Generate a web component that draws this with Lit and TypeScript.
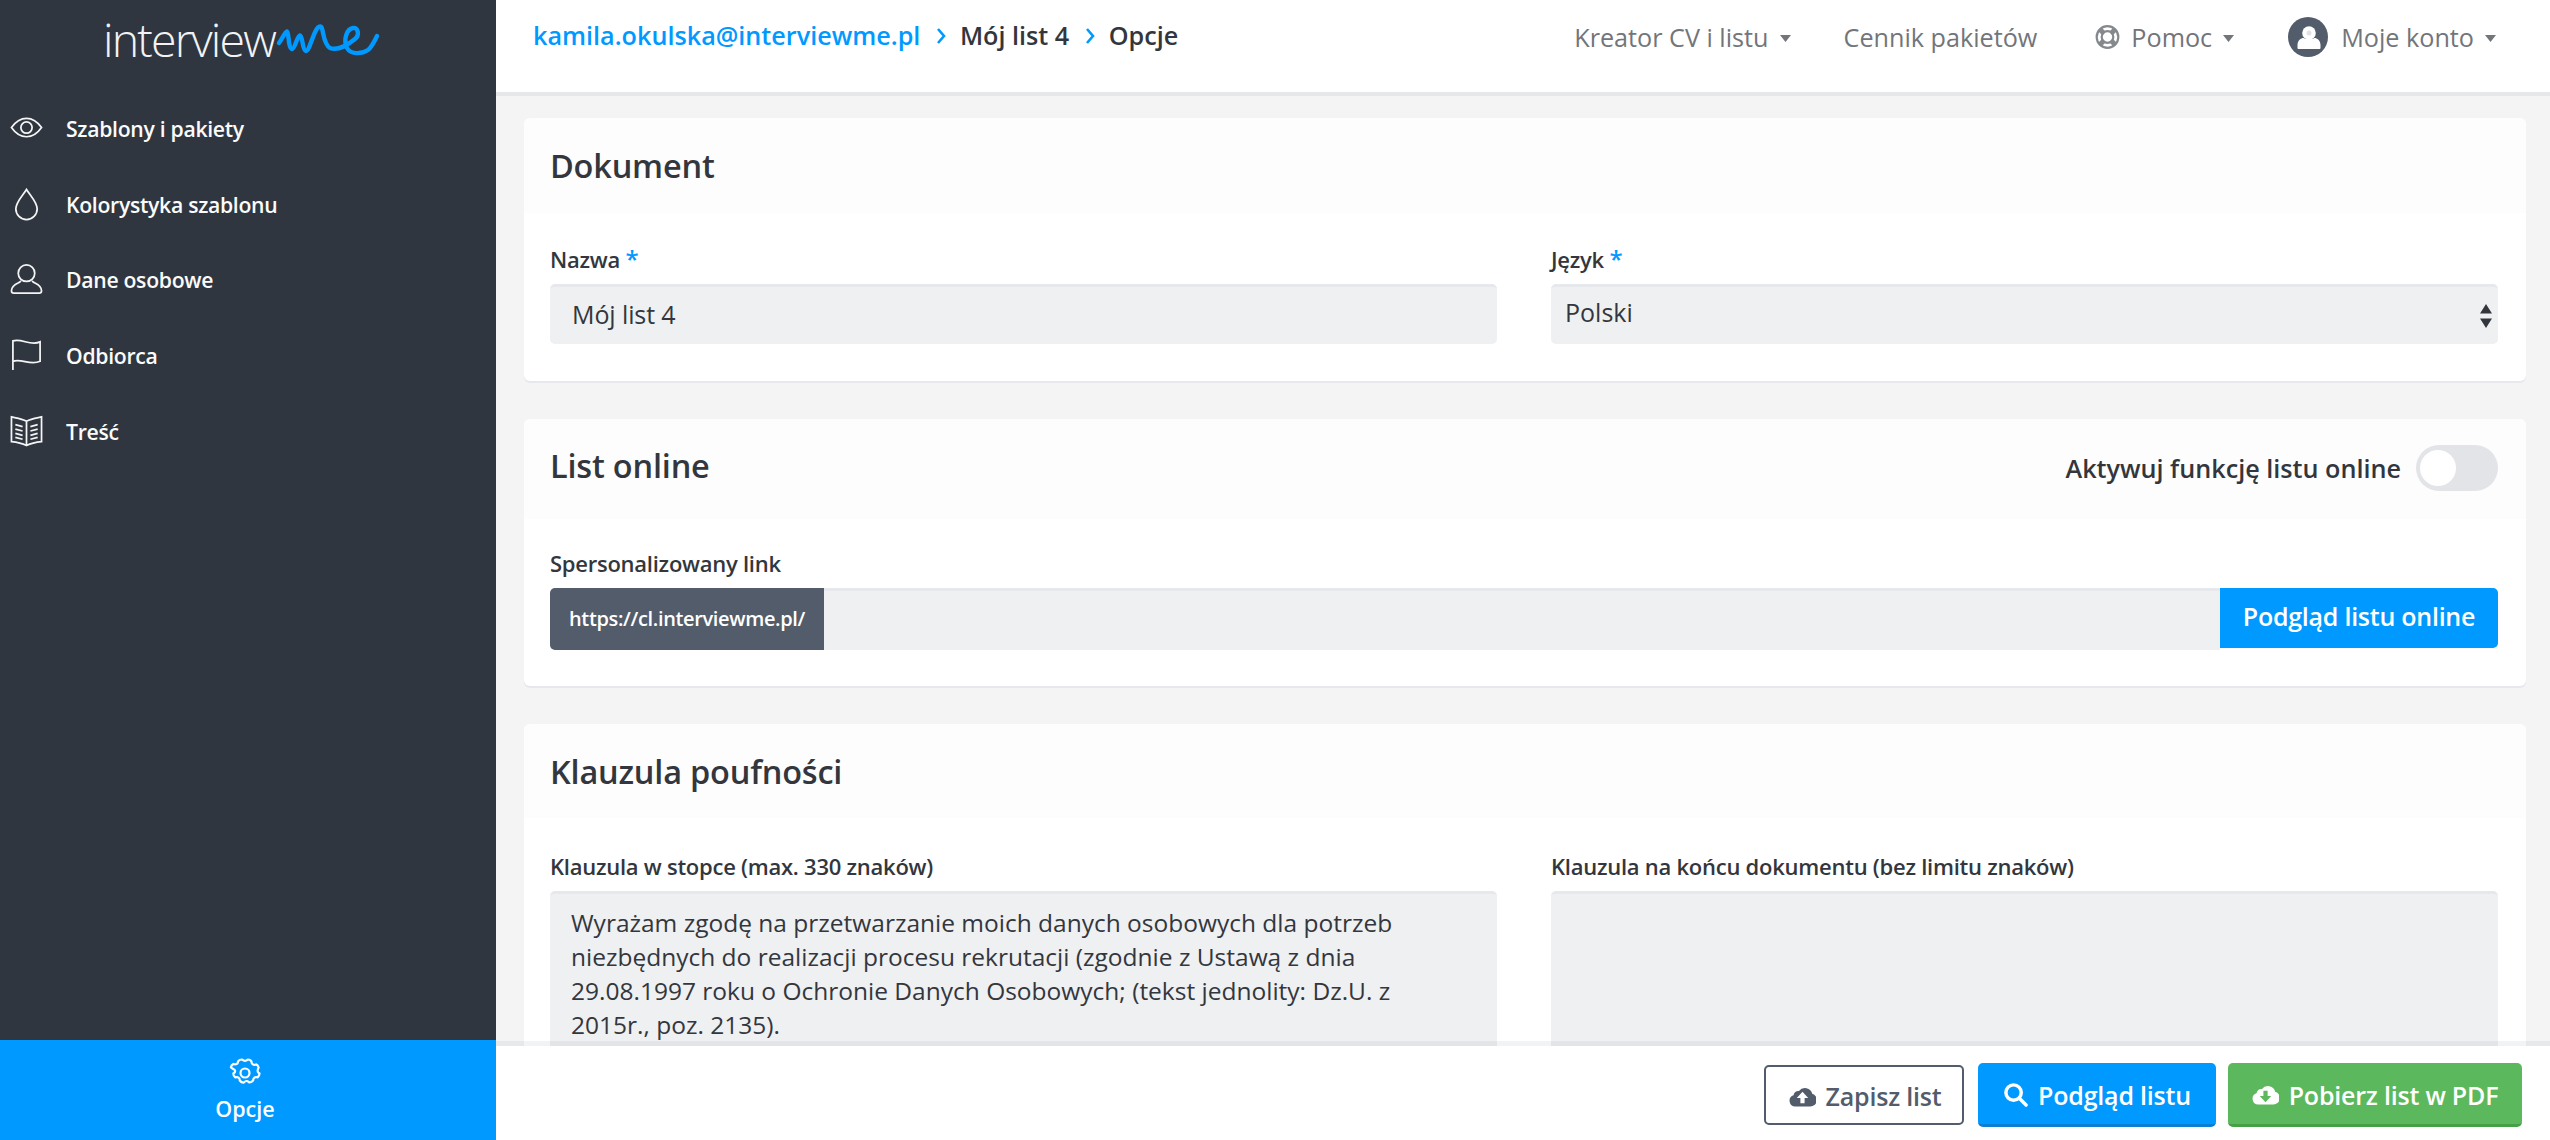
import { LitElement, html, css, svg } from "lit";
import { customElement } from "lit/decorators.js";

const caret = html`<svg class="caret" width="11" height="7" viewBox="0 0 11 7"><path d="M0 0h11L5.5 7z" fill="currentColor"/></svg>`;
const chev = html`<svg class="chev" width="10" height="20" viewBox="0 0 10 20"><path d="M2 3l6 7-6 7" fill="none" stroke="#0099ff" stroke-width="2.6"/></svg>`;

const navIcons = [
  svg`<path d="M1.5 16C6 9.5 11 6.5 17 6.5S28 9.5 32.5 16C28 22.5 23 25.5 17 25.5S6 22.5 1.5 16z"/><circle cx="17" cy="16" r="5.8"/>`,
  svg`<path d="M17 1.5C13 8 6 14.5 6 21.5a11 11 0 0 0 22 0C28 14.5 21 8 17 1.5z"/>`,
  svg`<circle cx="17" cy="10.5" r="8.5"/><path d="M11 18c1 2.5-9.5 3-9.5 10.5 0 1.6.8 2.5 2.5 2.5h26c1.700 0 2.500-.9 2.500-2.500C32.500 21 22 20.500 23 18"/>`,
  svg`<path d="M3 32V2c9-3 18 5.500 28 1v20c-10 4.500-19-3-28 0"/>`,
  svg`<path d="M17 6.500C12 3.500 6 3 1.500 2v25.500c5 .5 10.500 1.500 15.500 4 5-2.500 10.500-3.500 15.500-4V2C28 3 22 3.500 17 6.500zM17 6.500V32"/><path d="M5.500 10l7.500 2M5.500 14.500l7.500 2M5.500 19l7.500 2M5.500 23l7.500 2M28.500 10L21 12M28.500 14.500L21 16.500M28.500 19L21 21M28.500 23L21 25"/>`,
];
const navItems = ["Szablony i pakiety", "Kolorystyka szablonu", "Dane osobowe", "Odbiorca", "Treść"];

const cloud = (up: boolean) => html`<svg class="btn-ico" width="27" height="21" viewBox="0 0 28 22">
  <path fill="currentColor" d="M6.500 21.500A6 6 0 0 1 4.600 9.800 5 5 0 0 1 10.300 5.300 7.800 7.800 0 0 1 24.200 8.200 6.800 6.800 0 0 1 22 21.500z"/>
  <path fill="var(--ico)" d="${up ? "M14 6l6 6.500h-3.800V18h-4.400v-5.500H8z" : "M14 19l6-6.500h-3.800V7h-4.400v5.500H8z"}"/></svg>`;

@customElement("app-root")
export class AppRoot extends LitElement {
  static styles = css`
    :host { display: grid; grid-template-columns: 496px minmax(0, 1fr); grid-template-rows: minmax(0, 1fr); width: 2550px; height: 1140px; overflow: hidden;
      font-family: "Open Sans", "Noto Sans", sans-serif; color: #33373d; background: #f4f4f5; }
    * { box-sizing: border-box; }
    .side { background: #2f3640; display: flex; flex-direction: column; color: #fff; min-height: 0; }
    .logo { height: 91px; flex: none; display: flex; align-items: flex-start; padding: 9px 0 0 103px; }
    .logo span { font-size: 46.500px; font-weight: 300; letter-spacing: -1.800px; line-height: 60px; color: #f2f3f4; }
    .logo svg { margin: 6px 0 0 -3px; flex: none; }
    .nav { flex: 1; }
    .item { height: 75.600px; display: flex; align-items: center; padding-left: 10px; gap: 23px; font-size: 21.200px; font-weight: 600; color: #fbfbfb; letter-spacing: -.300px; }
    .item svg { fill: none; stroke: #f4f4f4; stroke-width: 1.800; flex: none; }
    .opts { height: 100px; flex: none; background: #0099ff; display: flex; flex-direction: column; align-items: center; padding: 17px 6px 0 0; font-size: 21.500px; font-weight: 600; gap: 5px; line-height: 30px; }
    .main { display: flex; flex-direction: column; min-width: 0; min-height: 0; background: #f4f4f5; }
    .top { height: 92px; flex: none; background: #fff; box-shadow: 0 4px 0 #e6e7e8; display: flex; align-items: flex-start; justify-content: space-between; padding: 0 54px 0 37px; position: relative; z-index: 1; }
    .crumbs { display: flex; align-items: center; height: 70px; font-size: 25.200px; font-weight: 600; color: #33373d; }
    .crumbs a { color: #0099ff; }
    .chev { margin: 2px 14px 0 15.500px; }
    .menu { display: flex; align-items: center; height: 74px; font-size: 25.200px; color: #72757a; }
    .menu .m { display: flex; align-items: center; }
    .caret { margin-left: 11px; margin-top: 2px; }
    .m1 { margin-right: 53px; } .m2 { margin-right: 58px; } .m3 { margin-right: 54px; }
    .buoy { margin-right: 11px; } .ava { margin-right: 13px; }
    .content { flex: 1; min-height: 0; overflow: hidden; padding: 26px 24px 0 28px; display: flex; flex-direction: column; gap: 38px; }
    .card { background: #fff; border-radius: 6px; box-shadow: 0 2px 0 #e6e8eb; flex: none; }
    .head { background: #fdfdfd; display: flex; align-items: center; justify-content: space-between; padding: 0 28px 0 26px; border-radius: 6px 6px 0 0; }
    h2 { margin: 0; font-size: 32.500px; font-weight: 600; color: #33373d; letter-spacing: -.200px; }
    .h1 { height: 95px; } .h2 { height: 100px; } .h3 { height: 94px; }
    .h2 h2 { margin-top: -7px; }
    .body { padding: 31px 28px 37px 26px; display: grid; grid-template-columns: 1fr 1fr; column-gap: 54px; }
    .body.one { grid-template-columns: 1fr; padding: 29px 28px 36px 26px; }
    .body.three { padding-top: 33px; }
    label { display: block; font-size: 22px; font-weight: 600; line-height: 30px; color: #33373d; margin-bottom: 10px; letter-spacing: -.250px; }
    label b { color: #0099ff; font-weight: 600; font-size: 24px; }
    input, select, textarea { display: block; width: 100%; background: #eff0f2; border: 0; border-top: 3px solid #e6e8eb; border-radius: 5px; font: inherit; font-size: 25px; color: #33373d; outline: 0; }
    input.t { height: 60px; padding: 0 22px 4px; letter-spacing: -.100px; }
    .sel { position: relative; }
    select { appearance: none; height: 60px; padding: 0 14px 8px; }
    .sel svg { position: absolute; right: 5px; top: 19px; pointer-events: none; }
    .switch { display: flex; align-items: center; gap: 15px; font-size: 25.200px; font-weight: 600; margin-top: -3px; }
    .tog { width: 82px; height: 46px; border-radius: 23px; background: #e2e4e8; display: flex; align-items: center; padding-left: 4px; }
    .tog i { display: block; width: 36px; height: 36px; border-radius: 50%; background: #fff; }
    .group { display: flex; height: 62px; }
    .pre { flex: none; width: 274px; background: #525c6b; color: #fff; font-size: 20px; font-weight: 600; letter-spacing: -.350px; display: flex; align-items: center; justify-content: center; border-radius: 5px 0 0 5px; padding-bottom: 2px; }
    .group input { flex: 1; min-width: 0; height: 62px; border-radius: 0; }
    .go { flex: none; width: 278px; height: 60px; border: 0; background: #0099ff; color: #fff; font: inherit; font-size: 25px; font-weight: 600; letter-spacing: -.250px; border-radius: 0 5px 5px 0; padding: 0 0 4px; }
    textarea { height: 300px; resize: none; padding: 12px 46px 12px 21px; font-size: 24.500px; line-height: 34px; overflow: hidden; }
    .foot { height: 94px; flex: none; background: #fff; box-shadow: 0 -5px 0 rgba(40,50,60,.06); display: flex; align-items: center; justify-content: flex-end; padding: 4px 28px 0 0; gap: 12px; position: relative; z-index: 1; }
    .btn { height: 64px; border: 0; border-bottom: 3px solid; border-radius: 5px; color: #fff; font: inherit; font-size: 25px; font-weight: 600; display: flex; align-items: center; justify-content: center; gap: 10px; letter-spacing: -.200px; padding: 2px 0 0; }
    .save { width: 200px; height: 60px; border: 2.500px solid #525c6b; background: #fff; color: #525c6b; --ico: #fff; margin-right: 2px; font-weight: 600; padding-left: 2px; }
    .prev { width: 238px; background: #0099ff; border-color: #0a7fd4; }
    .pdf { width: 294px; background: #5cb85c; border-color: #46a046; color: #fff; --ico: #5cb85c; }
  `;

  render() {
    return html`
      <aside class="side">
        <div class="logo"><span>interview</span>
          <svg width="115" height="50" viewBox="0 0 115 50" aria-hidden="true"><path d="M7 28C10 24 13 17 15 16.500 17 17 16 33 20 34 23 34 25 21 28 20.500 31 21 30 35 34 36 38 36 42 12 48 11.500 52 11 50 28 58 33 63 35 72 33 83 24 88 20 86 12 81 13 75 14 71 24 75 33 79 40 90 39 96 35 100 32 103 25 105 21" fill="none" stroke="#0099ff" stroke-width="4.400" stroke-linecap="round" stroke-linejoin="round"/></svg>
        </div>
        <nav class="nav">
          ${navItems.map((n, i) => html`<div class="item"><svg width="33" height="33" viewBox="0 0 34 34">${navIcons[i]}</svg><span>${n}</span></div>`)}
        </nav>
        <div class="opts">
          <svg width="32" height="32" viewBox="0 0 32 32" fill="none" stroke="#fff" stroke-width="2.200"><circle cx="16" cy="16" r="4.500"/><path d="M13 2.500c1 .8 1.500 1.300 3 1.300s2-.5 3-1.300c1.500 0 3 1 3.500 2.200 0 1.300.2 2 1.400 2.700s2 .5 3.200 0c1.200.4 2.200 1.800 2.500 3.200-.5 1.200-1 1.800-1 3.300 0 1.500.9 1.900 1.900 2.600 0 1.600-.9 3-1.900 3.800-1.200-.2-2-.5-3.200.3s-1.200 1.500-1.300 2.900c-.9 1-2.300 2-3.800 2-1-.9-1.400-1.500-2.800-1.500s-2 .8-2.900 1.600c-1.500 0-3-1-3.800-2.100 0-1.300-.1-2.100-1.300-2.900s-2-.5-3.200-.2c-1.100-.9-2-2.300-2-3.900 1-.6 1.900-1.100 1.900-2.600S2.100 11.300 1.900 10.200c.3-1.400 1.300-2.600 2.500-3.200 1.200.5 2 .6 3.200 0s1.400-1.400 1.500-2.700C9.800 3.300 11.500 2.500 13 2.500z"/></svg>
          <span>Opcje</span>
        </div>
      </aside>
      <div class="main">
        <header class="top">
          <div class="crumbs"><a>kamila.okulska@interviewme.pl</a>${chev}<span>Mój list 4</span>${chev}<span>Opcje</span></div>
          <div class="menu">
            <div class="m m1">Kreator CV i listu${caret}</div>
            <div class="m m2">Cennik pakietów</div>
            <div class="m m3">
              <svg class="buoy" width="25" height="26" viewBox="0 0 25 25" fill="none" stroke="#85888c"><circle cx="12.500" cy="12.500" r="10.800" stroke-width="2.200"/><circle cx="12.500" cy="12.500" r="5.800" stroke-width="2.200"/><path d="M5 5l4 4M20 5l-4 4M5 20l4-4M20 20l-4-4" stroke-width="5"/></svg>
              Pomoc${caret}
            </div>
            <div class="m">
              <svg class="ava" width="40" height="40" viewBox="0 0 40 40"><circle cx="20" cy="20" r="20" fill="#525c6b"/><circle cx="21" cy="16" r="6.800" fill="#fff"/><circle cx="21" cy="16" r="2.500" fill="#dfe1e4"/><path d="M9.500 31v-3c0-4.500 3.500-7 6-7 2.500 1.400 8.500 1.400 11 0 2.500 0 6 2.500 6 7v3c0 .6-.6 1-1 1h-21c-.5 0-1-.4-1-1z" fill="#fff"/></svg>
              Moje konto${caret}
            </div>
          </div>
        </header>
        <div class="content">
          <section class="card">
            <div class="head h1"><h2>Dokument</h2></div>
            <div class="body">
              <div><label>Nazwa <b>*</b></label><input class="t" value="Mój list 4" /></div>
              <div><label>Język <b>*</b></label>
                <div class="sel"><select><option>Polski</option></select>
                  <svg width="14" height="26" viewBox="0 0 14 26"><path d="M7 1l6 9.500H1zM7 25l-6-9.500h12z" fill="#33373d"/></svg></div></div>
            </div>
          </section>
          <section class="card">
            <div class="head h2"><h2>List online</h2>
              <div class="switch"><span>Aktywuj funkcję listu online</span><div class="tog"><i></i></div></div></div>
            <div class="body one">
              <div><label>Spersonalizowany link</label>
                <div class="group"><div class="pre">https://cl.interviewme.pl/</div><input /><button class="go">Podgląd listu online</button></div></div>
            </div>
          </section>
          <section class="card">
            <div class="head h3"><h2>Klauzula poufności</h2></div>
            <div class="body three">
              <div><label>Klauzula w stopce (max. 330 znaków)</label>
                <textarea>Wyrażam zgodę na przetwarzanie moich danych osobowych dla potrzeb niezbędnych do realizacji procesu rekrutacji (zgodnie z Ustawą z dnia 29.08.1997 roku o Ochronie Danych Osobowych; (tekst jednolity: Dz.U. z 2015r., poz. 2135).</textarea></div>
              <div><label>Klauzula na końcu dokumentu (bez limitu znaków)</label><textarea></textarea></div>
            </div>
          </section>
        </div>
        <footer class="foot">
          <button class="btn save">${cloud(true)}Zapisz list</button>
          <button class="btn prev"><svg width="25" height="25" viewBox="0 0 26 26" fill="none" stroke="#fff" stroke-width="3.600"><circle cx="11" cy="11" r="8"/><path d="M17 17l7 7" stroke-linecap="round"/></svg>Podgląd listu</button>
          <button class="btn pdf">${cloud(false)}Pobierz list w PDF</button>
        </footer>
      </div>
    `;
  }
}
